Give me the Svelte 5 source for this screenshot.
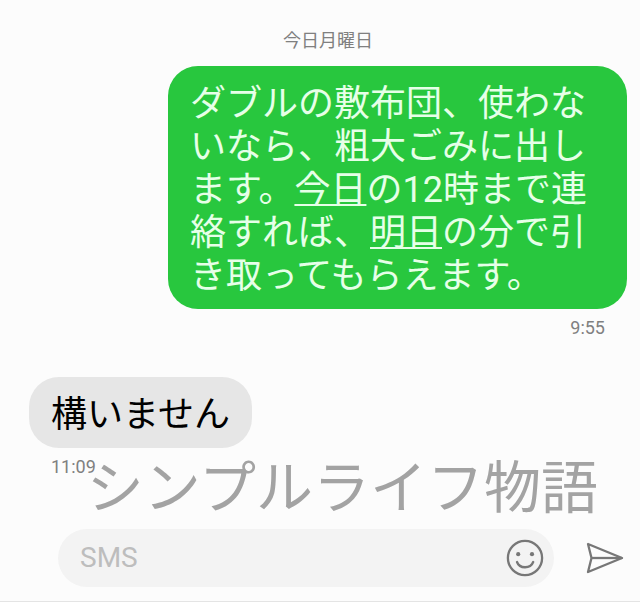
<script>
	const day = '今日月曜日';

	const messages = [
		{
			from: 'me',
			time: '9:55',
			parts: [
				{ text: 'ダブルの敷布団、使わないなら、粗大ごみに出します。' },
				{ text: '今日', link: true },
				{ text: 'の12時まで連絡すれば、' },
				{ text: '明日', link: true },
				{ text: 'の分で引き取ってもらえます。' }
			]
		},
		{
			from: 'them',
			time: '11:09',
			parts: [{ text: '構いません' }]
		}
	];

	let draft = '';

	function send() {
		draft = '';
	}
</script>

<main class="thread">
	<p class="day">{day}</p>

	{#each messages as message}
		<div class="message" class:sent={message.from === 'me'}>
			<div class="bubble">
				{#each message.parts as part}{#if part.link}<a href="#calendar">{part.text}</a>{:else}{part.text}{/if}{/each}
			</div>
			<time class="time">{message.time}</time>
		</div>
	{/each}
</main>

<footer class="footer">
	<span class="signature">シンプルライフ物語</span>
	<form class="composer" on:submit|preventDefault={send}>
		<div class="field">
			<input type="text" placeholder="SMS" aria-label="SMS" bind:value={draft} />
			<button type="button" class="icon-button" aria-label="Emoji">
				<svg width="38" height="38" viewBox="0 0 38 38" fill="none" stroke="#777" stroke-width="2.3" stroke-linecap="round">
					<circle cx="19" cy="19" r="17.1" />
					<circle cx="12.2" cy="15.2" r="2.1" fill="#777" stroke="none" />
					<circle cx="26" cy="15.2" r="2.1" fill="#777" stroke="none" />
					<path d="M11 23 C13.5 30 24.5 30 27.2 23" />
				</svg>
			</button>
		</div>
		<button type="submit" class="icon-button" aria-label="Send">
			<svg width="38" height="32" viewBox="0 0 38 32" fill="none" stroke="#777" stroke-width="2.3" stroke-linejoin="round">
				<path d="M2 2 L36 16 L2 30 L5.5 16 Z" />
				<path d="M5.5 16 H36" />
			</svg>
		</button>
	</form>
</footer>

<style>
	:global(body) {
		background-color: #fcfcfc;
		font-family: Roboto, 'Noto Sans CJK JP', sans-serif;
	}

	.thread {
		padding: 29px 13px 0 29px;
	}

	.day {
		margin: 0 0 13px;
		color: #808080;
		font-size: 18px;
		line-height: 24px;
		text-align: center;
	}

	.message {
		display: flex;
		flex-direction: column;
		align-items: flex-start;
		margin-bottom: 37px;
	}

	.message.sent {
		align-items: flex-end;
	}

	.bubble {
		box-sizing: border-box;
		max-width: 459px;
		padding: 17px 22px 11px;
		border-radius: 30px;
		background-color: #e6e6e6;
		color: #000;
		font-size: 36px;
		line-height: 43px;
	}

	.sent .bubble {
		background-color: #28c73e;
		color: #e6ffe8;
	}

	.bubble a {
		color: inherit;
		text-decoration: underline;
		text-decoration-thickness: 2px;
		text-decoration-skip-ink: none;
		text-underline-offset: 2px;
	}

	.time {
		margin: 7px 22px 0;
		color: #808080;
		font-size: 18px;
		line-height: 24px;
	}

	.footer {
		position: relative;
		padding: 13px 16px 14px 58px;
		border-bottom: 1px solid #e4e4e4;
	}

	/* lies over the end of the thread, just above the composer */
	.signature {
		position: absolute;
		right: 42px;
		bottom: 84px;
		color: #a3a3a3;
		font-size: 57px;
		line-height: 57px;
		white-space: nowrap;
		pointer-events: none;
	}

	.composer {
		display: flex;
		align-items: center;
		gap: 32px;
	}

	.field {
		flex: 1;
		display: flex;
		align-items: center;
		min-width: 0;
		height: 58px;
		padding: 0 10px 0 22px;
		border-radius: 29px;
		background-color: #f3f3f3;
	}

	input {
		flex: 1;
		min-width: 0;
		padding: 0;
		border: none;
		outline: none;
		background: none;
		color: #000;
		font-family: inherit;
		font-size: 28px;
		line-height: 36px;
	}

	input::placeholder {
		color: #bdbdbd;
	}

	.icon-button {
		display: flex;
		padding: 0;
		border: none;
		background: none;
		cursor: pointer;
	}
</style>
